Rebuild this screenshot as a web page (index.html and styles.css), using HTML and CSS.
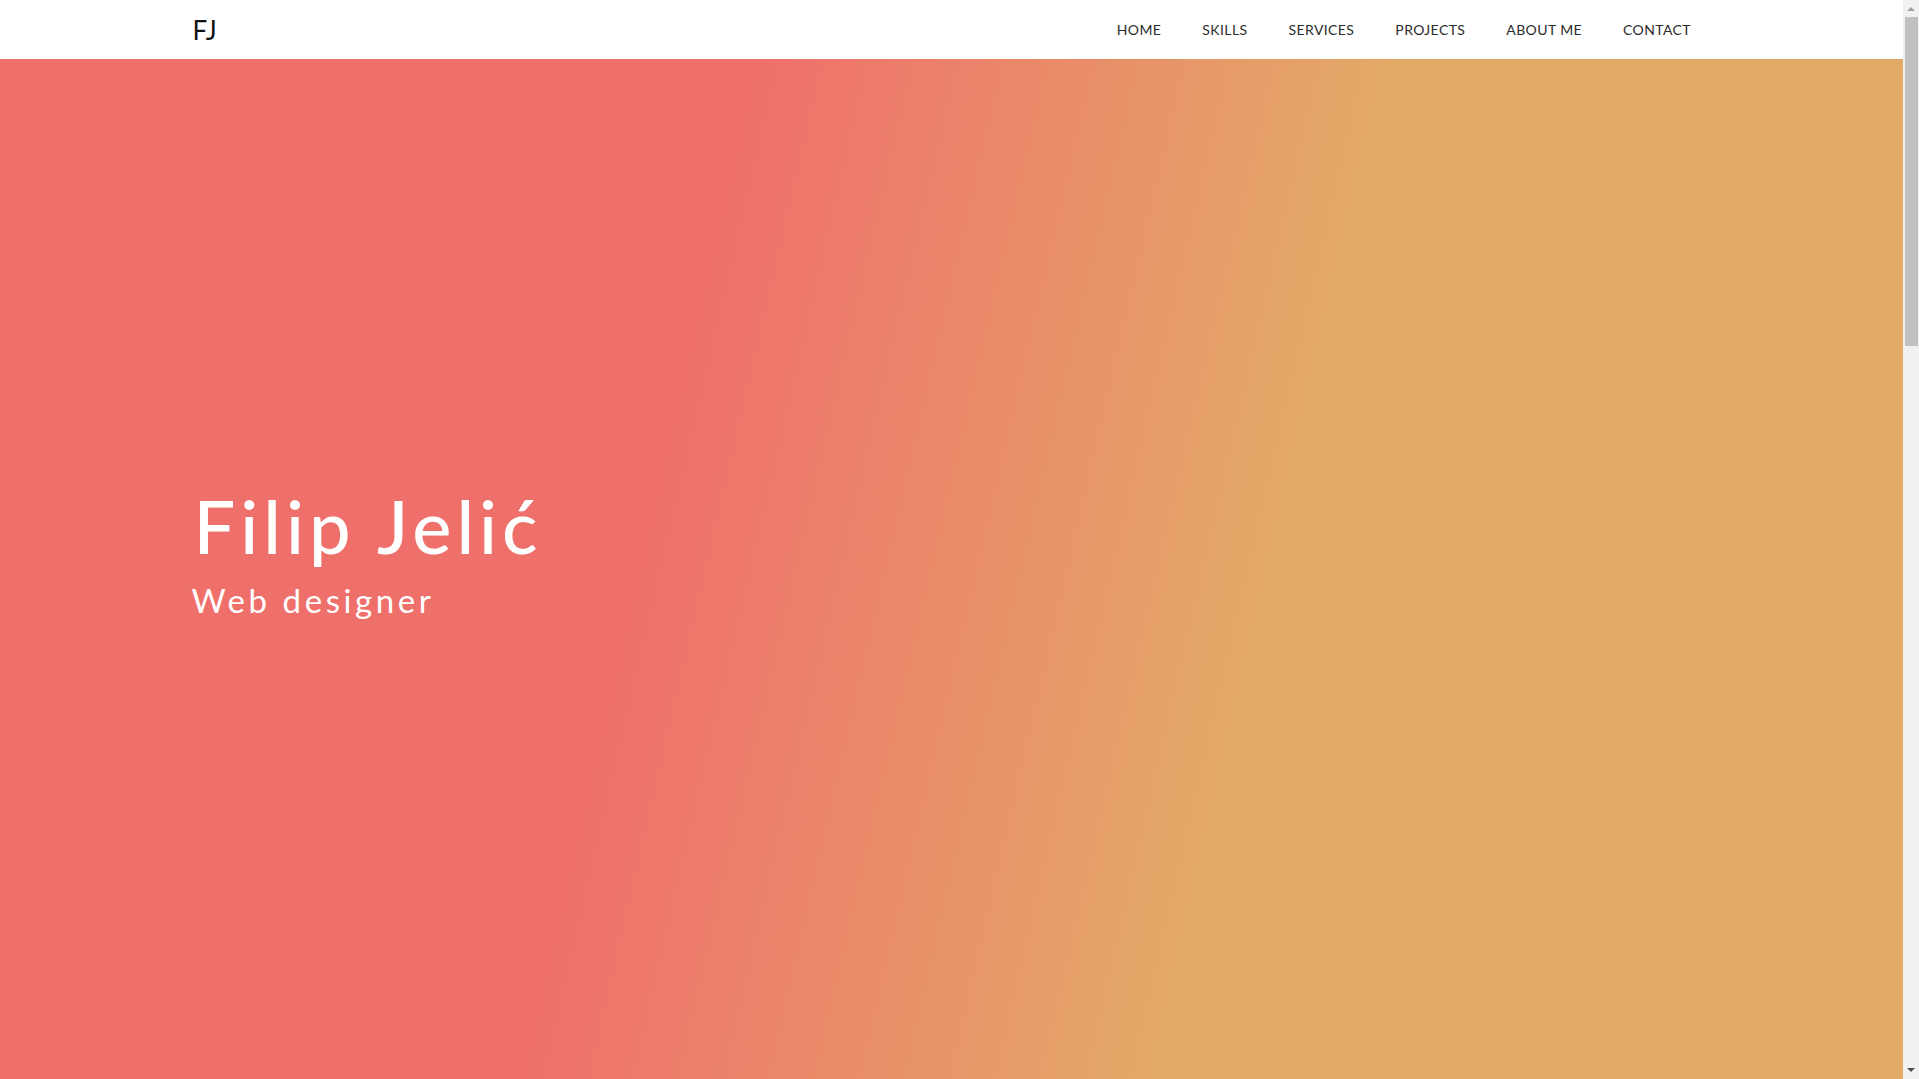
FILE: index.html
```html
<!DOCTYPE html>
<html lang="en">
<head>
<meta charset="utf-8">
<title>Filip Jelić — Web designer</title>
<link rel="stylesheet" href="styles.css">
</head>
<body>
<div class="page">
  <header class="navbar">
    <div class="container nav-inner">
      <a class="logo" href="#home">FJ</a>
      <ul class="nav-links">
        <li><a href="#home">HOME</a></li>
        <li><a href="#skills">SKILLS</a></li>
        <li><a href="#services">SERVICES</a></li>
        <li><a href="#projects">PROJECTS</a></li>
        <li><a href="#about">ABOUT ME</a></li>
        <li><a href="#contact">CONTACT</a></li>
      </ul>
    </div>
  </header>
  <section class="hero" id="home">
    <div class="container hero-inner">
      <h1 class="hero-title">Filip Jelić</h1>
      <p class="hero-sub">Web designer</p>
    </div>
  </section>
</div>
<div class="scrollbar" aria-hidden="true">
  <span class="sb-arrow sb-up"></span>
  <span class="sb-track"><span class="sb-thumb"></span></span>
  <span class="sb-arrow sb-down"></span>
</div>
</body>
</html>
```

FILE: styles.css
```css
html, body {
  margin: 0;
  padding: 0;
}
body {
  font-family: "Lato", "Open Sans", sans-serif;
  color: #2b2b2b;
  background: #fff;
  overflow: hidden;
}
.page {
  margin-right: 16px;
}
.container {
  width: 1520px;
  margin: 0 auto;
}
.navbar {
  height: 59px;
  background: #fff;
}
.nav-inner {
  height: 100%;
  display: flex;
  align-items: center;
  justify-content: space-between;
}
.logo {
  font-size: 26px;
  color: #111;
  text-decoration: none;
  letter-spacing: 1px;
  margin-left: 1px;
}
.nav-links {
  list-style: none;
  display: flex;
  margin: 0;
  padding: 0;
}
.nav-links a {
  display: block;
  padding: 0 20.5px;
  font-size: 14px;
  color: #2b2b2b;
  text-decoration: none;
  letter-spacing: 0.4px;
}
.hero {
  height: 1079px;
  background: linear-gradient(103deg, #ef706b 35.5%, #e3aa67 65%);
  color: #fff;
}
.hero-inner {
  padding-top: 430px;
}
.hero-title {
  margin: 0 0 0 2px;
  font-size: 74px;
  font-weight: 500;
  line-height: 1;
  letter-spacing: 5px;
}
.hero-sub {
  margin: 21px 0 0;
  font-size: 33px;
  font-weight: 400;
  line-height: 1;
  letter-spacing: 3.6px;
}
.scrollbar {
  position: fixed;
  top: 0;
  right: 0;
  width: 16px;
  height: 100vh;
  background: #f1f1f1;
  display: flex;
  flex-direction: column;
}
.sb-arrow {
  height: 17px;
  flex: none;
  position: relative;
}
.sb-up::after,
.sb-down::after {
  content: "";
  position: absolute;
  left: 4px;
  border-left: 4px solid transparent;
  border-right: 4px solid transparent;
}
.sb-up::after {
  top: 7px;
  border-bottom: 4px solid #a3a3a3;
}
.sb-down::after {
  bottom: 7px;
  border-top: 4px solid #505050;
}
.sb-track {
  flex: 1;
  padding: 0 1px 0 2px;
}
.sb-thumb {
  display: block;
  height: 329px;
  background: #c1c1c1;
}
```
